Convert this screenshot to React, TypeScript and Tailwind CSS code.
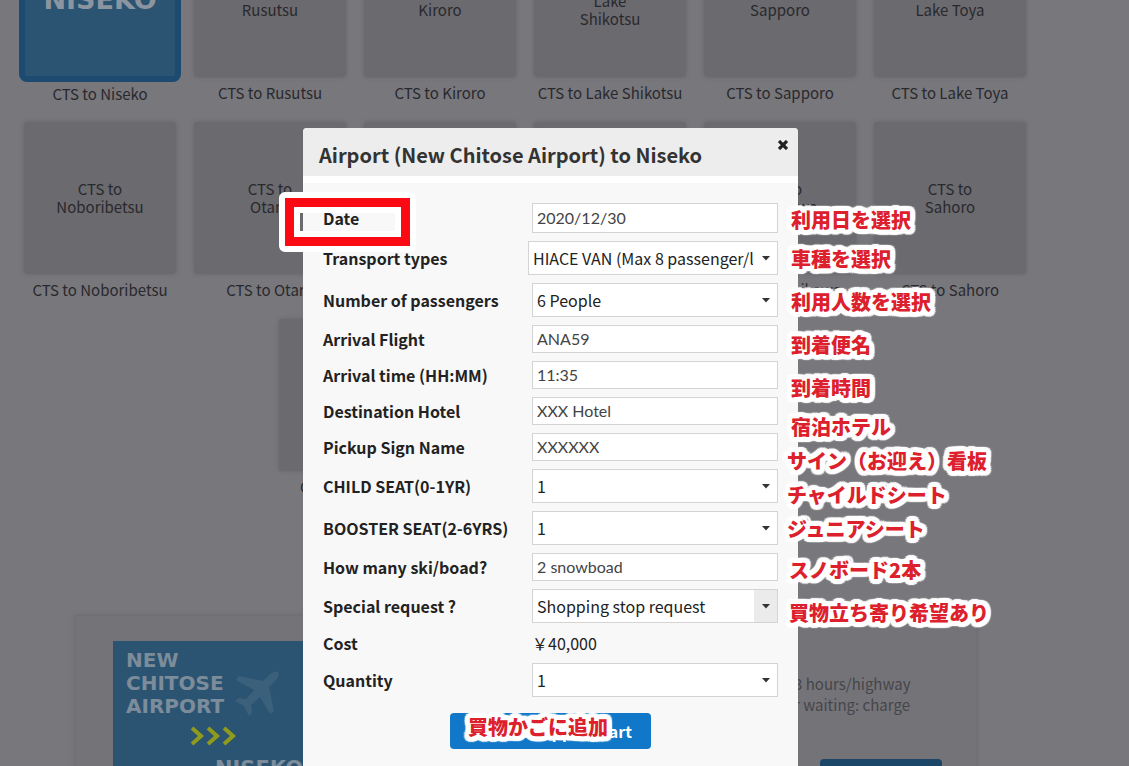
import type { ReactNode } from 'react';

const ROUTES = [
  [
    { id: 'Rusutsu', lines: ['CTS to', 'Rusutsu'] },
    { id: 'Kiroro', lines: ['CTS to', 'Kiroro'] },
    { id: 'Lake Shikotsu', lines: ['CTS to', 'Lake', 'Shikotsu'] },
    { id: 'Sapporo', lines: ['CTS to', 'Sapporo'] },
    { id: 'Lake Toya', lines: ['CTS to', 'Lake Toya'] },
  ],
  [
    { id: 'Noboribetsu', lines: ['CTS to', 'Noboribetsu'] },
    { id: 'Otaru', lines: ['CTS to', 'Otaru'] },
    { id: 'Furano', lines: ['CTS to', 'Furano'] },
    { id: 'Biei', lines: ['CTS to', 'Biei'] },
    { id: 'Asahikawa', lines: ['CTS to', 'Asahikawa'] },
    { id: 'Sahoro', lines: ['CTS to', 'Sahoro'] },
  ],
  [
    { id: 'Tomamu', lines: ['CTS to', 'Tomamu'] },
    { id: 'Obihiro', lines: ['CTS to', 'Obihiro'] },
    { id: 'Hakodate', lines: ['CTS to', 'Hakodate'] },
  ],
];

// Notes pinned beside the form, placed from the dialog's top left corner
const NOTES = [
  { text: '利用日を選択', pos: 'left-[488px] top-[78px]' },
  { text: '車種を選択', pos: 'left-[488px] top-[117px]' },
  { text: '利用人数を選択', pos: 'left-[488px] top-[160px]' },
  { text: '到着便名', pos: 'left-[488px] top-[203px]' },
  { text: '到着時間', pos: 'left-[488px] top-[246px]' },
  { text: '宿泊ホテル', pos: 'left-[488px] top-[285px]' },
  { text: 'サイン（お迎え）看板', pos: 'left-[484px] top-[319px]' },
  { text: 'チャイルドシート', pos: 'left-[484px] top-[353px]' },
  { text: 'ジュニアシート', pos: 'left-[484px] top-[387px]' },
  { text: 'スノボード2本', pos: 'left-[486px] top-[428px]' },
  { text: '買物立ち寄り希望あり', pos: 'left-[486px] top-[471px]' },
  { text: '買物かごに追加', pos: 'left-[165px] top-[585px]' },
];

// Thick rounded white outline
const NOTE_CLS = 'pointer-events-none absolute whitespace-nowrap text-xl leading-7 font-black text-[#dc202c] [text-shadow:5px_0_1px_white,-5px_0_1px_white,0_5px_1px_white,0_-5px_1px_white,4px_4px_1px_white,-4px_4px_1px_white,4px_-4px_1px_white,-4px_-4px_1px_white,5px_2px_1px_white,-5px_2px_1px_white,5px_-2px_1px_white,-5px_-2px_1px_white,2px_5px_1px_white,-2px_5px_1px_white,2px_-5px_1px_white,-2px_-5px_1px_white,2px_0_1px_white,-2px_0_1px_white,0_2px_1px_white,0_-2px_1px_white]';

const SELECT_CLS = 'w-full h-[34px] appearance-none border border-[#d4d4d4] bg-white pl-1 pr-6 text-base text-[#222] focus:outline-none';

function Tile({ id, lines }: { id: string; lines: string[] }) {
  return (
    <li className="w-[170px] h-[197px] px-[9px] text-center">
      <div className="h-[152px] rounded-sm bg-[#6b6a6f] shadow-[0_0_4px_#66656a] flex flex-col items-center justify-center leading-[18px]">
        {lines.map(l => <span key={l}>{l}</span>)}
      </div>
      <p className="mt-1 leading-6 whitespace-nowrap">CTS to {id}</p>
    </li>
  );
}

function Row({ id, label, children }: { id: string; label: string; children: ReactNode }) {
  return (
    <div className="flex items-center justify-between">
      <label htmlFor={id} className="font-bold text-[#222] whitespace-nowrap">{label}</label>
      {children}
    </div>
  );
}

function TextRow({ id, label, value, tall }: { id: string; label: string; value: string; tall?: boolean }) {
  return (
    <Row id={id} label={label}>
      <input
        id={id}
        type="text"
        defaultValue={value}
        className={`w-[246px] border border-[#d4d4d4] bg-white px-1 pb-0.5 font-['Lato',sans-serif] text-[#444] focus:outline-none ${tall ? 'h-[30px]' : 'h-7'}`}
      />
    </Row>
  );
}

function SelectRow({ id, label, value, wide, active }: { id: string; label: string; value: string; wide?: boolean; active?: boolean }) {
  return (
    <Row id={id} label={label}>
      <div className={`relative ${wide ? 'w-[250px]' : 'w-[246px]'}`}>
        <select id={id} className={SELECT_CLS}>
          <option>{value}</option>
        </select>
        <span className={`pointer-events-none absolute inset-y-px right-px w-[23px] flex items-center justify-center ${active ? 'bg-[#ebebeb]' : ''}`}>
          <svg viewBox="0 0 8 5" className="w-2 h-[5px]" fill="#333"><path d="M0 0h8L4 4.5z" /></svg>
        </span>
      </div>
    </Row>
  );
}

export default function App() {
  return (
    <div className="relative h-screen overflow-hidden bg-[#78777c] font-['Noto_Sans_CJK_JP',sans-serif] text-base text-[#29292d]">
      <main className="ml-[15px] -mt-[75px] max-w-[1020px] text-[15px]">
        {ROUTES.map((row, i) => (
          <ul key={i} className="flex justify-center">
            {i === 0 && (
              <li className="w-[170px] h-[197px] px-1 text-center">
                <div className="h-[157px] rounded-lg border-[6px] border-[#1d4a70] bg-[#2b5472] pb-1.5 flex items-center justify-center font-['DejaVu_Sans',sans-serif] text-[27px] font-bold text-[#8c959f]">
                  NISEKO
                </div>
                <p className="leading-6">CTS to Niseko</p>
              </li>
            )}
            {row.map(r => <Tile key={r.id} {...r} />)}
          </ul>
        ))}

        <section className="mt-[99px] ml-[60px] mr-[58px] h-[240px] flex justify-between border border-[#706f74] bg-[#747378] shadow-[0_0_4px_#6c6b70] pl-[37px] pr-[34px] pt-[25px]">
          <div className="relative w-[200px] h-[200px] bg-[#2b5472] pl-[13px] pr-2.5 pt-2 font-['DejaVu_Sans',sans-serif] text-xl leading-[23px] font-bold text-[#7d8c9a]">
            <p>NEW<br />CHITOSE<br />AIRPORT</p>
            <svg viewBox="0 0 46 46" className="absolute left-[122px] top-[30px] w-[46px] h-[46px]" fill="#3b607c">
              <path d="M43 1c-3-1-7 1-10 4l-5 5L4 5 1 9l18 10-8 9-8-1-3 3 9 5 5 10 3-3-1-8 9-8 10 17 4-3-5-24 5-5c3-3 6-7 4-10z" />
            </svg>
            <svg viewBox="0 0 46 20" className="mt-2 ml-16 w-[46px] h-5" fill="none" stroke="#8f9b1c" strokeWidth="4">
              <path d="M2 2l9 8-9 8M18 2l9 8-9 8M34 2l9 8-9 8" />
            </svg>
            <p className="mt-3 text-right text-[21px]">NISEKO</p>
          </div>
          <div className="w-[148px] pt-8 leading-[21px] text-[#46464a]">
            <p>3 hours/highway</p>
            <p>r waiting: charge</p>
            <button type="button" aria-label="Book" className="mt-[44px] ml-[26px] block h-9 w-[122px] rounded-sm bg-[#1c4668]" />
          </div>
        </section>
      </main>

      <div className="absolute inset-0 flex items-start justify-center pt-32 pr-7">
        <div role="dialog" aria-labelledby="dialog-title" className="relative w-[495px] min-h-[680px] rounded-t-sm bg-[#f8f8f8]">
          <header className="flex items-start justify-between h-[55px] rounded-t-sm border-b-[7px] border-white bg-[#ededed] pl-4 pr-2.5 pt-2.5">
            <h2 id="dialog-title" className="text-xl leading-[34px] font-bold text-[#333]">Airport (New Chitose Airport) to Niseko</h2>
            <button type="button" aria-label="Close" className="mt-0.5">
              <svg viewBox="0 0 10 10" className="w-2.5 h-2.5" stroke="#222" strokeWidth="3.2"><path d="M1 1l8 8M9 1L1 9" /></svg>
            </button>
          </header>

          <form className="flex flex-col gap-2 pt-5 pl-5 pr-5">
            <TextRow id="date" label="Date" value="2020/12/30" tall />
            <SelectRow id="transport" label="Transport types" value="HIACE VAN (Max 8 passenger/l" wide />
            <SelectRow id="passengers" label="Number of passengers" value="6 People" />
            <TextRow id="flight" label="Arrival Flight" value="ANA59" />
            <TextRow id="time" label="Arrival time (HH:MM)" value="11:35" />
            <TextRow id="hotel" label="Destination Hotel" value="XXX Hotel" />
            <TextRow id="sign" label="Pickup Sign Name" value="XXXXXX" />
            <SelectRow id="child" label="CHILD SEAT(0-1YR)" value="1" />
            <SelectRow id="booster" label="BOOSTER SEAT(2-6YRS)" value="1" />
            <TextRow id="ski" label="How many ski/boad?" value="2 snowboad" />
            <SelectRow id="special" label="Special request ?" value="Shopping stop request" active />
            <Row id="cost" label="Cost">
              <output id="cost" className="w-[246px] text-[#222]">￥40,000</output>
            </Row>
            <SelectRow id="quantity" label="Quantity" value="1" />
            <button type="button" className="mt-2 mx-auto w-[201px] h-9 rounded-sm bg-[#1177c8] font-bold text-white">
              Add to shopping cart
            </button>
          </form>

          {/* highlight round the date label */}
          <div className="pointer-events-none absolute -left-6 top-16 rounded-md border-[6px] border-white">
            <div className="w-[125px] h-12 border-[9px] border-[#fb0a14] shadow-[inset_0_0_0_6px_white]" />
          </div>

          {NOTES.map(n => (
            <p key={n.text} className={`${NOTE_CLS} ${n.pos}`}>{n.text}</p>
          ))}
        </div>
      </div>
    </div>
  );
}
